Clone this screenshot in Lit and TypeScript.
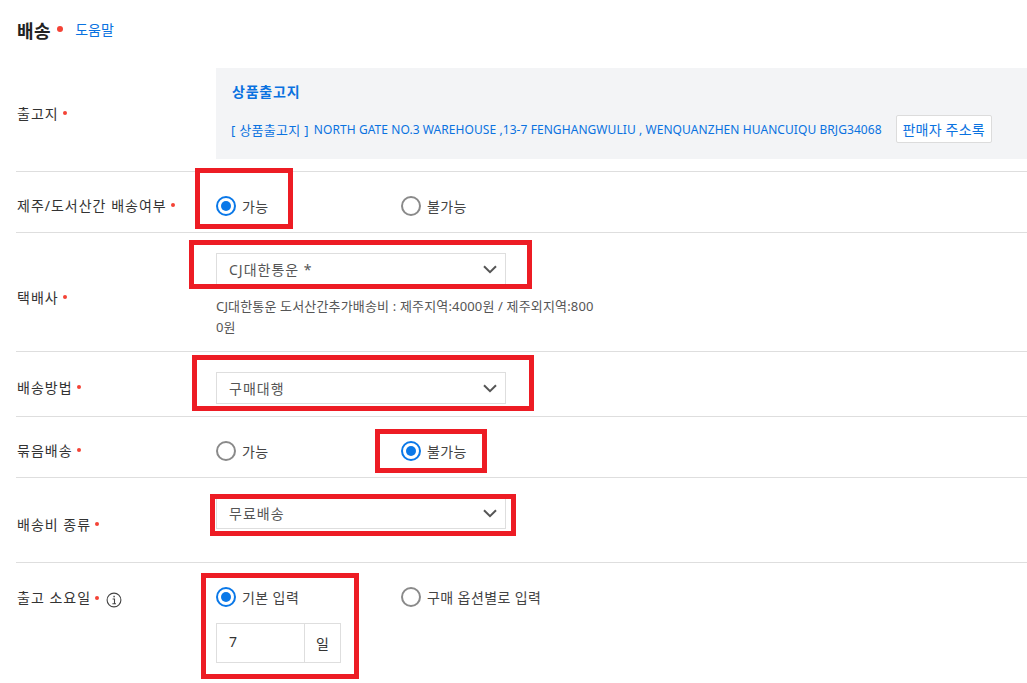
import { LitElement, html, css } from "lit";
import { customElement } from "lit/decorators.js";

const chevron = html`<svg class="chev" width="14" height="9" viewBox="0 0 14 9"><path d="M1 1.2 7 7.2 13 1.2" fill="none" stroke="#555" stroke-width="2"/></svg>`;
const info = html`<svg class="info" width="16" height="16" viewBox="0 0 16 16"><circle cx="8" cy="8" r="6.9" fill="none" stroke="#444" stroke-width="1.1"/><rect x="7.4" y="3.8" width="1.4" height="1.5" fill="#444"/><path d="M6.6 7h1.9v4.6M6.4 11.8h3.6" fill="none" stroke="#444" stroke-width="1.1"/></svg>`;

@customElement("app-root")
export class AppRoot extends LitElement {
  static styles = css`
    :host { display: block; width: 1027px; height: 683px; overflow: hidden; position: relative; background: #fff;
      font-family: "Noto Sans", "Noto Sans CJK KR", sans-serif; font-size: 14px; color: #333; }
    .page { padding-left: 16px; }
    .head { height: 68px; display: flex; align-items: flex-start; padding-top: 18px; box-sizing: border-box; }
    .head h2 { margin: 0; font-size: 18px; line-height: 26px; font-weight: 700; color: #222; letter-spacing: .5px; padding-left: 1px; }
    .head .dot { width: 6px; height: 6px; border-radius: 50%; background: #f44336; margin: 8px 0 0 6px; }
    .head a { color: #0a72e0; font-size: 14px; line-height: 24px; margin-left: 12px; }
    .row { display: grid; grid-template-columns: 200px 1fr; border-bottom: 1px solid #dedede; box-sizing: border-box; }
    .r1 { height: 104px; } .r2 { height: 61px; } .r3 { height: 119px; } .r4 { height: 65px; }
    .r5 { height: 61px; } .r6 { height: 85px; } .r7 { border-bottom: 0; height: 121px; }
    .lab { display: flex; align-items: center; gap: 4px; white-space: nowrap; color: #333; letter-spacing: 1px; padding-left: 1px; }
    .lab.l1 { padding-bottom: 13px; } .lab.l2 { padding-top: 6px; }
    .lab.r3l { padding-top: 9px; } .lab.r6l { padding-top: 7px; } .lab.r7l { align-items: flex-start; padding-top: 24px; }
    .lab .d { width: 4px; height: 4px; border-radius: 50%; background: #f44336; flex: none; }
    .r7l .d { margin-top: 9px; }
    .info { margin-left: 3px; margin-top: 5px; }
    .box { width: 811px; height: 91px; background: #f3f4f6; box-sizing: border-box; padding: 14px 16px; color: #0a72e0; }
    .box b { display: block; font-size: 14px; line-height: 20px; font-weight: 700; letter-spacing: .8px; }
    .addr { display: flex; align-items: center; margin-top: 13px; font-size: 12px; white-space: nowrap; margin-left: -1px; letter-spacing: .07px; }
    .addr .k { font-size: 13px; letter-spacing: .3px; margin-right: 5px; }
    .addr button { margin-left: 14px; width: 96px; height: 28px; background: #fff; border: 1px solid #dcdcdc; border-radius: 2px; color: #0a72e0; font: inherit; font-size: 14px; letter-spacing: .2px; padding: 0; }
    .radios { display: grid; grid-template-columns: 185px 1fr; align-items: center; }
    .radios.low { padding-top: 8px; }
    .radio { display: flex; align-items: center; gap: 6px; font-size: 14px; letter-spacing: .4px; color: #444; white-space: nowrap; }
    .rc { width: 20px; height: 20px; border-radius: 50%; border: 2px solid #8a8a8a; box-sizing: border-box; flex: none; display: flex; align-items: center; justify-content: center; }
    .rc.on { border-color: #0a78e8; }
    .rc.on::after { content: ""; width: 10px; height: 10px; border-radius: 50%; background: #0a78e8; }
    .sel { width: 290px; height: 32px; border: 1px solid #dedede; box-sizing: border-box; display: flex; align-items: center; justify-content: space-between; padding: 0 8px 0 12px; color: #555; font-size: 14px; letter-spacing: 1px; background: #fff; }
    .help { width: 384px; margin-top: 11px; font-size: 13px; letter-spacing: .16px; line-height: 21px; color: #555; word-break: break-all; }
    .p3 { padding-top: 20px; } .p4 { padding-top: 20px; } .p6 { padding-top: 19px; }
    .p7 { padding-top: 24px; }
    .inp { display: flex; margin-top: 16px; }
    .inp div { height: 40px; border: 1px solid #dedede; box-sizing: border-box; display: flex; align-items: center; }
    .inp .v { width: 89px; padding: 0 0 4px 12px; color: #333; }
    .inp .u { width: 37px; margin-left: -1px; justify-content: center; }
    .mark { position: absolute; border: 5px solid #ed1c24; box-sizing: border-box; }
    .m1 { left: 195px; top: 168px; width: 98px; height: 61px; }
    .m2 { left: 189px; top: 240px; width: 343px; height: 49px; }
    .m3 { left: 192px; top: 355px; width: 342px; height: 56px; }
    .m4 { left: 375px; top: 429px; width: 112px; height: 44px; }
    .m5 { left: 210px; top: 494px; width: 306px; height: 42px; }
    .m6 { left: 201px; top: 573px; width: 158px; height: 106px; }
  `;

  private radio(text: string, on = false) {
    return html`<div class="radio"><span class="rc ${on ? "on" : ""}"></span>${text}</div>`;
  }

  render() {
    return html`
      <div class="page">
        <div class="head"><h2>배송</h2><span class="dot"></span><a>도움말</a></div>
        <div class="row r1">
          <div class="lab l1">출고지<span class="d"></span></div>
          <div class="box">
            <b>상품출고지</b>
            <div class="addr"><span class="k">[ 상품출고지 ]</span><span>NORTH GATE NO.3 WAREHOUSE ,13-7 FENGHANGWULIU , WENQUANZHEN HUANCUIQU BRJG34068</span><button>판매자 주소록</button></div>
          </div>
        </div>
        <div class="row r2">
          <div class="lab l2">제주/도서산간 배송여부<span class="d"></span></div>
          <div class="radios low">${this.radio("가능", true)}${this.radio("불가능")}</div>
        </div>
        <div class="row r3">
          <div class="lab r3l">택배사<span class="d"></span></div>
          <div class="p3">
            <div class="sel">CJ대한통운 *${chevron}</div>
            <div class="help">CJ대한통운 도서산간추가배송비 : 제주지역:4000원 / 제주외지역:8000원</div>
          </div>
        </div>
        <div class="row r4">
          <div class="lab l2">배송방법<span class="d"></span></div>
          <div class="p4"><div class="sel">구매대행${chevron}</div></div>
        </div>
        <div class="row r5">
          <div class="lab l2">묶음배송<span class="d"></span></div>
          <div class="radios low">${this.radio("가능")}${this.radio("불가능", true)}</div>
        </div>
        <div class="row r6">
          <div class="lab r6l">배송비 종류<span class="d"></span></div>
          <div class="p6"><div class="sel">무료배송${chevron}</div></div>
        </div>
        <div class="row r7">
          <div class="lab r7l">출고 소요일<span class="d"></span>${info}</div>
          <div class="p7">
            <div class="radios">${this.radio("기본 입력", true)}${this.radio("구매 옵션별로 입력")}</div>
            <div class="inp"><div class="v">7</div><div class="u">일</div></div>
          </div>
        </div>
      </div>
      <div class="mark m1"></div><div class="mark m2"></div><div class="mark m3"></div>
      <div class="mark m4"></div><div class="mark m5"></div><div class="mark m6"></div>
    `;
  }
}
